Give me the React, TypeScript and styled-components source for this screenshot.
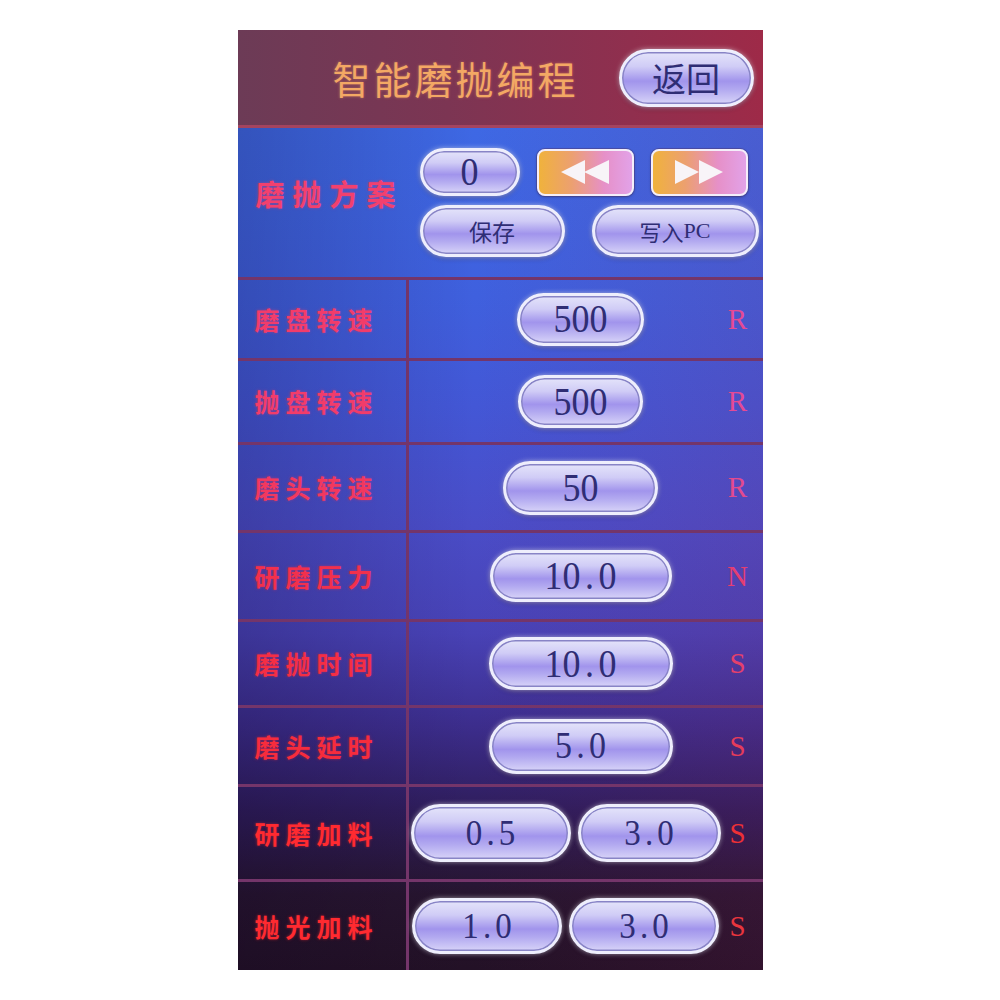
import React from "react";
import styled, { createGlobalStyle } from "styled-components";

const Global = createGlobalStyle`
  html, body { margin: 0; padding: 0; background: #ffffff; }
  #root { width: 1000px; min-height: 1000px; }
`;

const Screen = styled.div`
  width: 525px;
  height: 940px;
  margin: 30px auto 0;
  display: flex;
  flex-direction: column;
  overflow: hidden;
  font-family: "Noto Sans CJK SC", sans-serif;
`;

const Header = styled.header`
  height: 95px;
  flex: none;
  border-bottom: 3px solid #a4445f;
  background: linear-gradient(90deg, #6c3b56 0%, #7c3553 40%, #902f4e 75%, #9e2a48 100%);
  display: flex;
  align-items: center;
  justify-content: flex-end;
  gap: 40px;
  padding-right: 9px;
`;

const Title = styled.h1`
  margin: 0;
  font-family: "Noto Sans CJK SC", sans-serif;
  font-weight: 400;
  font-size: 38px;
  letter-spacing: 3px;
  color: #f3a864;
  text-shadow: 0 0 3px rgba(255, 170, 100, 0.45);
  line-height: 1;
`;

const Body = styled.main`
  flex: 1;
  display: flex;
  flex-direction: column;
  background:
    linear-gradient(90deg, rgba(10, 0, 30, 0.2) 0%, rgba(10, 0, 30, 0) 45%, rgba(140, 30, 90, 0.14) 100%),
    linear-gradient(180deg, #3e68e4 0%, #3f60de 20%, #4357d6 33%, #4a4dc8 47%, #4842b6 60%, #3c2d8c 71%, #2f1d5c 81%, #27152f 91%, #231126 100%);
`;

const Scheme = styled.section`
  height: 149px;
  flex: none;
  display: flex;
  align-items: center;
`;

const Label = styled.div<{ $color: string; $size: number; $gap: number }>`
  font-family: "Noto Sans CJK SC", sans-serif;
  font-weight: 700;
  font-size: ${(p) => p.$size}px;
  letter-spacing: ${(p) => p.$gap}px;
  color: ${(p) => p.$color};
  text-shadow: 0 0 3px ${(p) => p.$color}88;
  line-height: 1;
  white-space: nowrap;
`;

const SchemeLabelBox = styled.div`
  width: 182px;
  padding-left: 18px;
  padding-bottom: 18px;
  box-sizing: border-box;
`;

const ButtonColumn = styled.div`
  display: flex;
  flex-direction: column;
  gap: 9px;
`;

const ButtonRow = styled.div<{ $gap: number }>`
  display: flex;
  align-items: center;
  gap: ${(p) => p.$gap}px;
`;

const Pill = styled.div<{ $w: number; $h: number; $fs: number }>`
  width: ${(p) => p.$w}px;
  height: ${(p) => p.$h}px;
  box-sizing: border-box;
  flex: none;
  border-radius: 999px;
  border: 3px solid #eeeefc;
  background: linear-gradient(180deg, #e4e4fa 0%, #d0ccf6 28%, #a194ec 56%, #b2a9f0 72%, #d8d4f8 100%);
  box-shadow: inset 0 0 0 1.5px #8884c6, 0 0 5px rgba(255, 255, 255, 0.55), 0 2px 4px rgba(20, 0, 40, 0.35);
  display: flex;
  align-items: center;
  justify-content: center;
  color: #2f2d74;
  font-family: "Liberation Serif", "Noto Sans CJK SC", serif;
  font-size: ${(p) => p.$fs}px;
  line-height: 1;
`;

const CjkText = styled.span`
  font-family: "Noto Sans CJK SC", sans-serif;
  font-weight: 400;
`;

const DigitRun = styled.span`
  display: inline-block;
  transform: scaleY(1.1);
`;

const Glyph = styled.span`
  display: inline-block;
  width: 0.5em;
  text-align: center;
`;

const ArrowButton = styled.div`
  width: 97px;
  height: 47px;
  box-sizing: border-box;
  border: 2px solid #f4eefa;
  border-radius: 8px;
  background: linear-gradient(90deg, #f0b23c 0%, #eca070 35%, #e690c8 70%, #e2a2e8 100%);
  box-shadow: 0 0 0 1px rgba(80, 60, 120, 0.5), 0 1px 3px rgba(0, 0, 0, 0.3);
  display: flex;
  align-items: center;
  justify-content: center;
`;

const Row = styled.div<{ $h: number }>`
  height: ${(p) => p.$h}px;
  flex: none;
  box-sizing: border-box;
  border-top: 3px solid #74356a;
  display: grid;
  grid-template-columns: 168px 1fr;
`;

const LabelCell = styled.div`
  display: flex;
  align-items: center;
  padding-left: 17px;
`;

const ValueCell = styled.div<{ $pair?: boolean }>`
  border-left: 3px solid #74356a;
  display: grid;
  grid-template-columns: 1fr 30px;
  align-items: center;
  padding: 0 10px 0 ${(p) => (p.$pair ? 0 : 30)}px;
`;

const PillArea = styled.div`
  display: flex;
  justify-content: center;
  align-items: center;
  gap: 7px;
`;

const Unit = styled.div<{ $color: string }>`
  font-family: "Liberation Serif", serif;
  font-size: 29px;
  color: ${(p) => p.$color};
  text-align: center;
  line-height: 1;
`;

const Digits = ({ text }: { text: string }) => (
  <DigitRun>
    {text.split("").map((c, i) => (
      <Glyph key={i}>{c}</Glyph>
    ))}
  </DigitRun>
);

const Rewind = () => (
  <svg width="48" height="24" viewBox="0 0 48 24">
    <polygon points="24,0 0,12 24,24" fill="#f8f4f8" />
    <polygon points="48,0 23,12 48,24" fill="#f8f4f8" />
  </svg>
);

const Forward = () => (
  <svg width="48" height="24" viewBox="0 0 48 24">
    <polygon points="0,0 24,12 0,24" fill="#f8f4f8" />
    <polygon points="24,0 48,12 24,24" fill="#f8f4f8" />
  </svg>
);

type Val = { text: string; w: number; h: number; fs: number };
type RowData = { label: string; color: string; h: number; unit: string; unitColor: string; values: Val[] };

const rows: RowData[] = [
  { label: "磨盘转速", color: "#f23c6a", h: 81, unit: "R", unitColor: "#e44a94", values: [{ text: "500", w: 127, h: 53, fs: 36 }] },
  { label: "抛盘转速", color: "#f23c6a", h: 84, unit: "R", unitColor: "#e44a94", values: [{ text: "500", w: 125, h: 53, fs: 36 }] },
  { label: "磨头转速", color: "#f2385e", h: 88, unit: "R", unitColor: "#e24a8e", values: [{ text: "50", w: 155, h: 54, fs: 36 }] },
  { label: "研磨压力", color: "#f2304c", h: 89, unit: "N", unitColor: "#e43e72", values: [{ text: "10.0", w: 182, h: 52, fs: 36 }] },
  { label: "磨抛时间", color: "#f42e44", h: 86, unit: "S", unitColor: "#e4406c", values: [{ text: "10.0", w: 184, h: 53, fs: 36 }] },
  { label: "磨头延时", color: "#f62c3c", h: 79, unit: "S", unitColor: "#e43c5a", values: [{ text: "5.0", w: 184, h: 55, fs: 34 }] },
  {
    label: "研磨加料", color: "#ff2a30", h: 95, unit: "S", unitColor: "#ec3036",
    values: [{ text: "0.5", w: 160, h: 58, fs: 33 }, { text: "3.0", w: 143, h: 58, fs: 33 }],
  },
  {
    label: "抛光加料", color: "#ff2a30", h: 91, unit: "S", unitColor: "#e8363e",
    values: [{ text: "1.0", w: 150, h: 56, fs: 33 }, { text: "3.0", w: 150, h: 56, fs: 33 }],
  },
];

export default function App() {
  return (
    <>
      <Global />
      <Screen>
        <Header>
          <Title>智能磨抛编程</Title>
          <Pill $w={135} $h={58} $fs={34}>
            <CjkText>返回</CjkText>
          </Pill>
        </Header>
        <Body>
          <Scheme>
            <SchemeLabelBox>
              <Label $color="#f2406e" $size={29} $gap={8}>磨抛方案</Label>
            </SchemeLabelBox>
            <ButtonColumn>
              <ButtonRow $gap={17}>
                <Pill $w={100} $h={48} $fs={36}>
                  <Digits text="0" />
                </Pill>
                <ArrowButton>
                  <Rewind />
                </ArrowButton>
                <ArrowButton>
                  <Forward />
                </ArrowButton>
              </ButtonRow>
              <ButtonRow $gap={27}>
                <Pill $w={145} $h={52} $fs={23}>
                  <CjkText>保存</CjkText>
                </Pill>
                <Pill $w={167} $h={52} $fs={22}>
                  <CjkText>写入</CjkText>PC
                </Pill>
              </ButtonRow>
            </ButtonColumn>
          </Scheme>
          {rows.map((r) => (
            <Row key={r.label} $h={r.h}>
              <LabelCell>
                <Label $color={r.color} $size={25} $gap={6}>{r.label}</Label>
              </LabelCell>
              <ValueCell $pair={r.values.length > 1}>
                <PillArea>
                  {r.values.map((v, i) => (
                    <Pill key={i} $w={v.w} $h={v.h} $fs={v.fs}>
                      <Digits text={v.text} />
                    </Pill>
                  ))}
                </PillArea>
                <Unit $color={r.unitColor}>{r.unit}</Unit>
              </ValueCell>
            </Row>
          ))}
        </Body>
      </Screen>
    </>
  );
}
